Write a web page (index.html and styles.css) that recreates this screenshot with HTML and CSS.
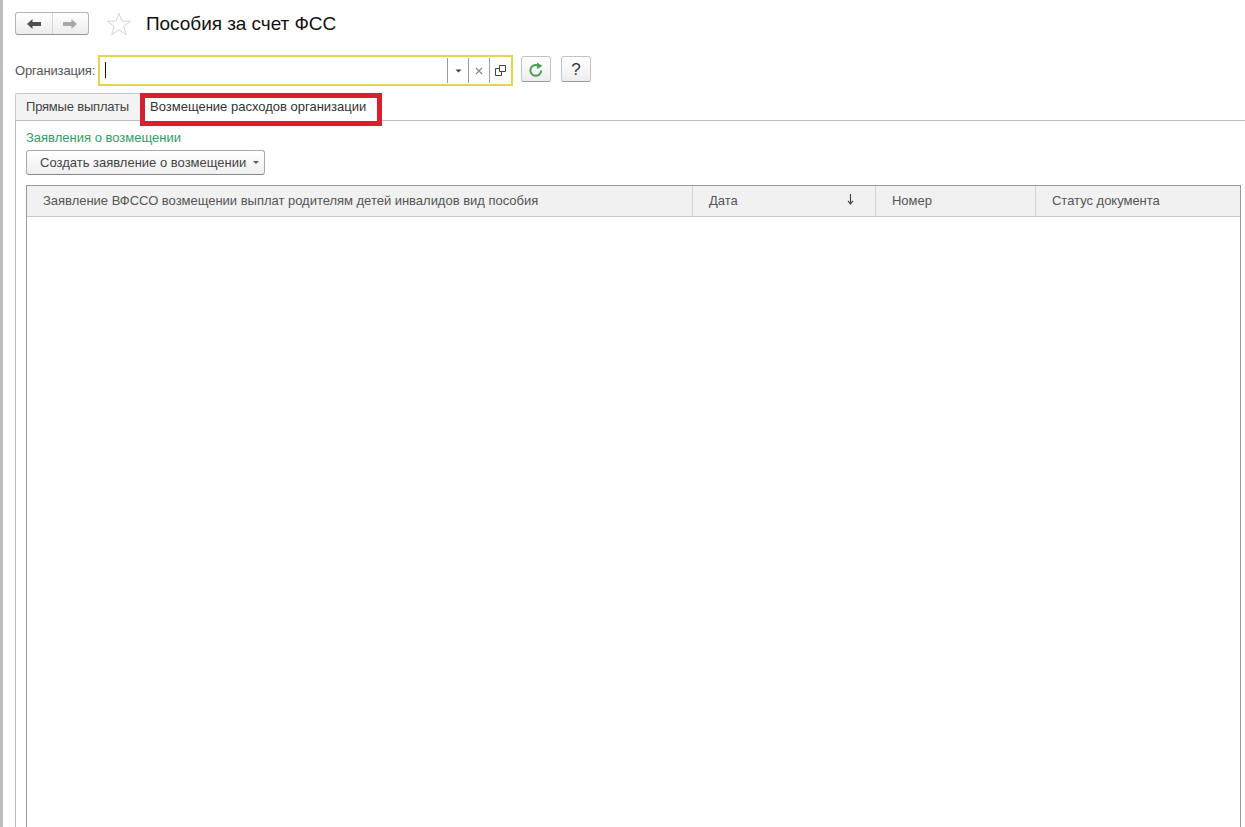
FILE: index.html
```html
<!DOCTYPE html>
<html lang="ru">
<head>
<meta charset="utf-8">
<title>Пособия за счет ФСС</title>
<link rel="stylesheet" href="styles.css">
</head>
<body>
<div class="page">
  <header class="titlebar">
    <div class="navgroup">
      <button class="navbtn"><svg width="16" height="12" viewBox="0 0 16 12"><path d="M1 6 L6.5 1 V4 H15 V8 H6.5 V11 Z" fill="#4f4f4f"/></svg></button>
      <button class="navbtn navbtn-off"><svg width="16" height="12" viewBox="0 0 16 12"><path d="M15 6 L9.5 1 V4 H1 V8 H9.5 V11 Z" fill="#a8a8a8"/></svg></button>
    </div>
    <svg class="star" width="26" height="24" viewBox="0 0 26 24"><path d="M13 1.5 L16 9 L24.5 9.3 L17.8 14.4 L20.2 22.6 L13 17.8 L5.8 22.6 L8.2 14.4 L1.5 9.3 L10 9 Z" fill="#fff" stroke="#d4d4d4"/></svg>
    <h1 class="title">Пособия за счет ФСС</h1>
  </header>
  <div class="orgrow">
    <label class="orglabel">Организация:</label>
    <div class="orgfield">
      <div class="orginput"><span class="caret"></span></div>
      <span class="fieldbtn"><svg width="7" height="4" viewBox="0 0 7 4"><path d="M0.5 0.5 H6.5 L3.5 3.5 Z" fill="#444"/></svg></span>
      <span class="fieldbtn"><svg width="8" height="8" viewBox="0 0 8 8"><path d="M1 1 L7 7 M7 1 L1 7" stroke="#888" stroke-width="1.1"/></svg></span>
      <span class="fieldbtn fieldbtn-last"><svg width="11" height="11" viewBox="0 0 11 11"><path d="M4.5 0.5 H10.5 V6.5 H4.5 Z" fill="#fff" stroke="#444"/><path d="M4.5 3.5 H0.5 V10.5 H6.5 V6.5" fill="none" stroke="#444"/></svg></span>
    </div>
    <button class="toolbtn"><svg width="16" height="16" viewBox="0 0 16 16"><path d="M13.2 8.5 A5.4 5.4 0 1 1 10.6 3.8" fill="none" stroke="#4d9e50" stroke-width="2"/><path d="M9 0.5 L14.5 4 L9 7 Z" fill="#4d9e50"/></svg></button>
    <button class="toolbtn toolbtn-help">?</button>
  </div>
  <nav class="tabs">
    <div class="tab">Прямые выплаты</div>
    <div class="tab tab-active">Возмещение расходов организации</div>
  </nav>
  <section class="tabbody">
    <div class="grouptitle">Заявления о возмещении</div>
    <button class="createbtn">Создать заявление о возмещении<svg width="6" height="3" viewBox="0 0 6 3"><path d="M0 0 H6 L3 3 Z" fill="#555"/></svg></button>
    <div class="grid">
      <div class="gridhead">
        <div class="col col-a">Заявление ВФССО возмещении выплат родителям детей инвалидов вид пособия</div>
        <div class="col col-b"><span>Дата</span><svg class="sort" width="7" height="11" viewBox="0 0 7 11"><path d="M3.5 0 V9 M1 6.8 L3.5 10 L6 6.8" fill="none" stroke="#444" stroke-width="1.1"/></svg></div>
        <div class="col col-c">Номер</div>
        <div class="col col-d">Статус документа</div>
      </div>
    </div>
  </section>
</div>
</body>
</html>
```
FILE: styles.css
```css
* { box-sizing: border-box; }
html, body { margin: 0; height: 100%; overflow: hidden; background: #fff; }
body { font-family: "Liberation Sans", Arial, sans-serif; font-size: 13px; color: #444; }
button { font-family: inherit; padding: 0; margin: 0; cursor: default; }
.page { height: 827px; display: flex; flex-direction: column; border-left: 3px solid #bcbcbc; padding-left: 12px; }

.titlebar { height: 49px; display: flex; align-items: flex-start; flex: none; }
.navgroup { display: flex; margin-top: 12px; height: 23px; width: 74px; border: 1px solid #b5b5b5; border-bottom-color: #979797; border-radius: 3px; background: linear-gradient(#fff, #ececec); }
.navbtn { flex: 1; border: 0; background: none; display: flex; align-items: center; justify-content: center; }
.navbtn-off { border-left: 1px solid #d5d5d5; }
.star { margin: 12px 0 0 17px; flex: none; }
.title { margin: 12px 0 0 14px; font-size: 19px; line-height: 24px; font-weight: normal; color: #111; letter-spacing: -0.05px; }

.orgrow { height: 44px; display: flex; align-items: flex-start; flex: none; }
.orglabel { line-height: 16px; margin-top: 14px; width: 83px; color: #555; flex: none; letter-spacing: -0.15px; }
.orgfield { width: 415px; height: 31px; margin-top: 6px; border: 2px solid #e8d44a; display: flex; align-items: stretch; background: #fff; flex: none; padding: 1px 0; }
.orginput { flex: 1; padding: 4px 5px; }
.caret { display: block; width: 1px; height: 16px; background: #111; }
.fieldbtn { width: 21px; border-left: 1px solid #9c9c9c; display: flex; align-items: center; justify-content: center; }
.fieldbtn-last { width: 22px; }
.toolbtn { margin: 7px 0 0 8px; width: 30px; height: 26px; padding-top: 1px; border: 1px solid #c2c2c2; border-bottom-color: #999; border-radius: 3px; background: linear-gradient(#fff, #eee); display: flex; align-items: center; justify-content: center; flex: none; }
.toolbtn-help { margin-left: 10px; font-size: 17px; color: #333; }

.tabs { display: flex; height: 27px; flex: none; }
.tab { height: 27px; width: 125px; padding-left: 10px; border: 1px solid #c8c8c8; border-right: 0; border-bottom: 0; background: #f3f3f3; line-height: 26px; color: #444; border-radius: 2px 0 0 0; letter-spacing: -0.2px; flex: none; }
.tab-active { width: 242px; height: 33px; padding-left: 5px; border: 5px solid #d81f2f; background: #fff; color: #333; line-height: 17px; border-radius: 0; position: relative; letter-spacing: 0; }

.tabbody { flex: 1; min-height: 0; border-left: 1px solid #b9b9b9; border-top: 1px solid #bdbdbd; padding: 9px 4px 0 10px; display: flex; flex-direction: column; }
.grouptitle { line-height: 15px; color: #2f9e63; height: 15px; flex: none; }
.createbtn { margin-top: 5px; width: 239px; height: 25px; border: 1px solid #aaa; border-bottom-color: #8a8a8a; border-radius: 3px; background: linear-gradient(#fff, #efefef); font-size: 13px; color: #444; display: flex; align-items: center; padding-left: 13px; gap: 7px; flex: none; }
.grid { margin-top: 10px; flex: 1; min-height: 0; border: 1px solid #999; border-bottom: 0; }
.gridhead { display: flex; height: 31px; background: #f1f1f1; border-bottom: 1px solid #c6c6c6; }
.col { line-height: 30px; color: #555; padding-left: 16px; border-right: 1px solid #d2d2d2; white-space: nowrap; flex: none; letter-spacing: -0.02px; }
.col-a { width: 666px; }
.col-b { width: 183px; display: flex; justify-content: space-between; align-items: center; padding-right: 21px; }
.col-c { width: 160px; }
.col-d { flex: 1; border-right: 0; }
.sort { margin-top: -3px; }
```
